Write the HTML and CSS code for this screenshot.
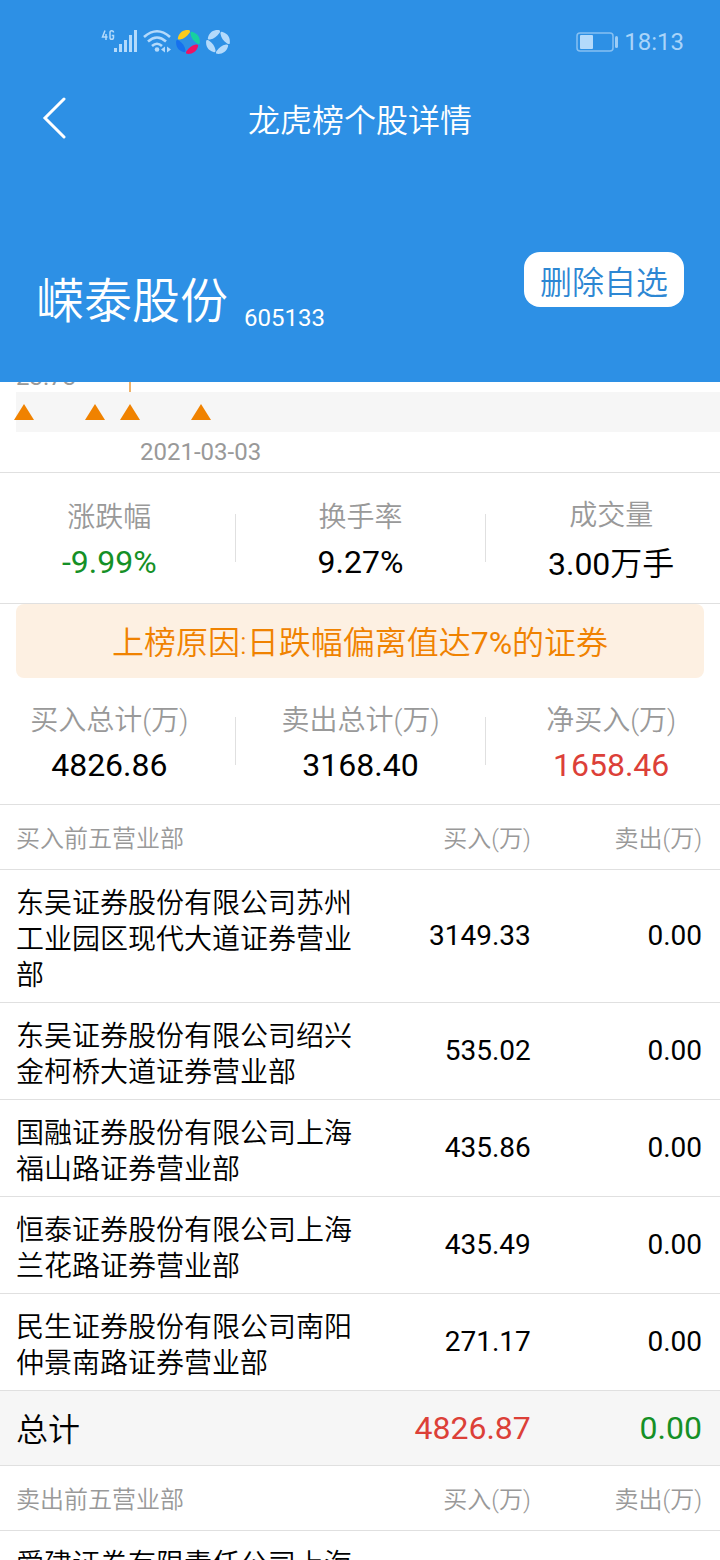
FILE: index.html
```html
<!DOCTYPE html>
<html lang="zh-CN">
<head>
<meta charset="utf-8">
<meta name="viewport" content="width=device-width, initial-scale=1">
<title>龙虎榜个股详情</title>
<link rel="stylesheet" href="styles.css">
</head>

<body>

<header class="header">
  <div class="status">
    <svg class="status-icons" width="132" height="32" viewBox="0 0 132 32" fill="#b4dafb" aria-hidden="true">
      <!-- 4G -->
      <g fill="none" stroke="#b4dafb" stroke-width="1.5">
        <path d="M5 4.500 L2.500 11 H7.500 M6 8 V14"/>
        <path d="M13.500 6.500 Q13.500 4.700 11.700 4.700 Q10 4.700 10 6.500 V11.500 Q10 13.300 11.700 13.300 Q13.500 13.300 13.500 11.500 V9.500 H11.700"/>
      </g>
      <!-- signal -->
      <rect x="14" y="22" width="3" height="4"/>
      <rect x="19" y="18" width="3" height="8"/>
      <rect x="24" y="14" width="3" height="12"/>
      <rect x="29" y="9" width="3" height="17"/>
      <rect x="34" y="4" width="3" height="22"/>
      <!-- wifi -->
      <g fill="none" stroke="#b4dafb" stroke-width="2.600">
        <path d="M44 11 Q57 -0.500 70 11"/>
        <path d="M48 15.500 Q57 7.500 66 15.500"/>
        <path d="M52 20 Q57 15.500 62 20"/>
      </g>
      <circle cx="57" cy="23.500" r="2.300"/>
      <path d="M65 20.500 V26.500 L61 23.500 Z M67 20.500 V26.500 L71 23.500 Z"/>
      <!-- pinwheels -->
      <defs>
        <path id="blade" d="M-10 -4.500 C-8.500 -10 -4 -12.500 1.500 -11.800 C2.500 -11 2 -9.500 1 -8.500 C-1 -5.500 -4 -3.200 -8 -2.500 C-10 -2.300 -10.500 -3 -10 -4.500 Z"/>
      </defs>
      <g transform="translate(88 16)">
        <use href="#blade" fill="#fccb1c"/>
        <use href="#blade" fill="#17d1a0" transform="rotate(90)"/>
        <use href="#blade" fill="#ee1263" transform="rotate(180)"/>
        <use href="#blade" fill="#1671ee" transform="rotate(270)"/>
      </g>
      <g transform="translate(118 16)">
        <use href="#blade"/>
        <use href="#blade" transform="rotate(90)"/>
        <use href="#blade" transform="rotate(180)"/>
        <use href="#blade" transform="rotate(270)"/>
      </g>
    </svg>
    <div class="status-right">
      <svg width="42" height="20" viewBox="0 0 42 20" aria-hidden="true">
        <rect x="1" y="1" width="36" height="18" rx="3" fill="none" stroke="#86c0f2" stroke-width="1.500"/>
        <rect x="4" y="3" width="13" height="14" rx="1" fill="#b4dafb"/>
        <rect x="39" y="4" width="3" height="12" rx="1.500" fill="#9dcdf6"/>
      </svg>
      <span class="clock">18:13</span>
    </div>
  </div>

  <nav class="nav">
    <button class="back" type="button" aria-label="返回">
      <svg width="24" height="42" viewBox="0 0 24 42" fill="none" stroke="#fff" stroke-width="3" stroke-linecap="round">
        <path d="M22 2 L3 21 L22 40"/>
      </svg>
    </button>
    <h1 class="title">龙虎榜个股详情</h1>
  </nav>

  <div class="stock">
    <span class="stock-name">嵘泰股份</span>
    <span class="stock-code">605133</span>
    <button class="remove" type="button">删除自选</button>
  </div>
</header>

<main class="content">

  <section class="chart">
    <div class="chart-low">23.73</div>
    <svg class="chart-strip" width="100%" height="50" aria-hidden="true">
      <rect x="16" y="10" width="100%" height="40" fill="#f6f6f6"/>
      <rect x="129" y="0" width="2" height="10" fill="#efb26a"/>
      <g fill="#f08200">
        <path d="M24 22 L34 38 H14 Z"/>
        <path d="M95 22 L105 38 H85 Z"/>
        <path d="M130 22 L140 38 H120 Z"/>
        <path d="M201 22 L211 38 H191 Z"/>
      </g>
    </svg>
    <div class="chart-date">2021-03-03</div>
  </section>

  <section class="panel">
    <dl class="stats">
      <div class="stat"><dt>涨跌幅</dt><dd class="down">-9.99%</dd></div>
      <div class="stat"><dt>换手率</dt><dd>9.27%</dd></div>
      <div class="stat"><dt>成交量</dt><dd class="with-unit"><span class="num">3.00</span>万手</dd></div>
    </dl>
  </section>

  <section class="panel">
    <p class="reason">上榜原因:日跌幅偏离值达<span class="num">7%</span>的证券</p>
    <dl class="stats">
      <div class="stat"><dt>买入总计(万)</dt><dd>4826.86</dd></div>
      <div class="stat"><dt>卖出总计(万)</dt><dd>3168.40</dd></div>
      <div class="stat"><dt>净买入(万)</dt><dd class="up">1658.46</dd></div>
    </dl>
  </section>

  <table class="seats">
    <thead>
      <tr><th>买入前五营业部</th><th>买入(万)</th><th>卖出(万)</th></tr>
    </thead>
    <tbody>
      <tr><td>东吴证券股份有限公司苏州工业园区现代大道证券营业部</td><td>3149.33</td><td>0.00</td></tr>
      <tr><td>东吴证券股份有限公司绍兴金柯桥大道证券营业部</td><td>535.02</td><td>0.00</td></tr>
      <tr><td>国融证券股份有限公司上海福山路证券营业部</td><td>435.86</td><td>0.00</td></tr>
      <tr><td>恒泰证券股份有限公司上海兰花路证券营业部</td><td>435.49</td><td>0.00</td></tr>
      <tr><td>民生证券股份有限公司南阳仲景南路证券营业部</td><td>271.17</td><td>0.00</td></tr>
    </tbody>
    <tfoot>
      <tr><td>总计</td><td class="up">4826.87</td><td class="down">0.00</td></tr>
    </tfoot>
  </table>

  <table class="seats">
    <thead>
      <tr><th>卖出前五营业部</th><th>买入(万)</th><th>卖出(万)</th></tr>
    </thead>
    <tbody>
      <tr><td>爱建证券有限责任公司上海</td><td></td><td></td></tr>
    </tbody>
  </table>

</main>

</body>
</html>
```
FILE: styles.css
```css
* { box-sizing: border-box; }

body {
  display: flex;
  flex-direction: column;
  height: 100vh;
  margin: 0;
  overflow: hidden;
  background: #fff;
  color: #000;
  font-family: Roboto, "Noto Sans CJK SC", sans-serif;
}

button {
  padding: 0;
  border: 0;
  background: none;
  font-family: inherit;
}

/* Header */

.header {
  flex: none;
  padding-bottom: 48px;
  background: #2d90e5;
  color: #fff;
}

.status {
  display: flex;
  justify-content: space-between;
  align-items: center;
  height: 84px;
  padding: 0 36px 0 100px;
}

.status-right {
  display: flex;
  align-items: center;
  gap: 6px;
}

.clock {
  color: #a9d4f9;
  font-size: 24px;
}

.nav {
  display: grid;
  grid-template-columns: 80px 1fr 80px;
  align-items: center;
  height: 68px;
}

.back {
  display: flex;
  justify-content: flex-end;
  padding-right: 14px;
}

.title {
  margin: 0;
  font-size: 32px;
  font-weight: 350;
  text-align: center;
}

.stock {
  display: flex;
  align-items: flex-end;
  height: 82px;
  margin-top: 100px;
  padding: 0 36px;
}

.stock-name {
  margin-right: 16px;
  font-size: 48px;
  font-weight: 350;
  line-height: 64px;
}

.stock-code {
  font-size: 24px;
  line-height: 32px;
}

.remove {
  align-self: flex-start;
  height: 55px;
  margin-left: auto;
  padding: 0 16px;
  border-radius: 16px;
  background: #fff;
  color: #2d87d3;
  font-size: 32px;
  font-weight: 350;
}

/* Chart, scrolled under the header */

.content {
  flex: 1;
  min-height: 0;
  overflow: hidden;
}

.chart {
  border-bottom: 1px solid #e0e0e0;
  color: #999;
  font-size: 24px;
}

.chart-low {
  height: 28px;
  margin-top: -28px;
  padding-left: 16px;
  line-height: 46px;
}

.chart-strip { display: block; }

.chart-date {
  padding-left: 140px;
  line-height: 40px;
}

/* Figures */

.panel {
  overflow: hidden;
  border-bottom: 1px solid #e0e0e0;
}

.stats {
  display: grid;
  grid-template-columns: repeat(3, 1fr);
  align-items: center;
  height: 130px;
  margin: 0 -16px;
}

.reason + .stats { height: 126px; }

.stat {
  display: flex;
  flex-direction: column;
  justify-content: center;
  height: 48px;
  text-align: center;
}

.stat + .stat { border-left: 1px solid #e0e0e0; }

.stat dt {
  color: #999;
  font-size: 28px;
  font-weight: 350;
  line-height: 48px;
}

.stat dd {
  margin: 0;
  font-size: 32px;
  line-height: 40px;
}

.stat .with-unit {
  padding-top: 4px;
  font-weight: 350;
}

.num { font-weight: 400; }

.reason {
  margin: 0 16px;
  padding: 4px 0 0;
  border-radius: 8px;
  background: #fdf0e2;
  color: #f08200;
  font-size: 32px;
  font-weight: 350;
  line-height: 70px;
  text-align: center;
}

/* Seats */

.seats {
  width: 100%;
  table-layout: fixed;
  border-collapse: separate;
  border-spacing: 0;
}

.seats th,
.seats td {
  padding: 12px 2px;
  border-bottom: 1px solid #e0e0e0;
  font-size: 28px;
  line-height: 36px;
  text-align: right;
}

.seats th {
  width: 24%;
  padding: 16px 2px 12px;
  color: #999;
  font-size: 24px;
  font-weight: 350;
}

.seats tr :first-child {
  width: 50%;
  padding-left: 16px;
  font-weight: 350;
  text-align: left;
}

.seats tr :last-child {
  width: 26%;
  padding-right: 18px;
}

.seats tbody td:first-child {
  padding-top: 16px;
  padding-bottom: 8px;
}

.seats tfoot td {
  padding-top: 19px;
  padding-bottom: 19px;
  background: #f6f6f6;
  font-size: 32px;
}

.seats tfoot td:first-child {
  padding-top: 21px;
  padding-bottom: 17px;
}

.seats .up,
.stat .up { color: #dc4038; }

.seats .down,
.stat .down { color: #159026; }
```
